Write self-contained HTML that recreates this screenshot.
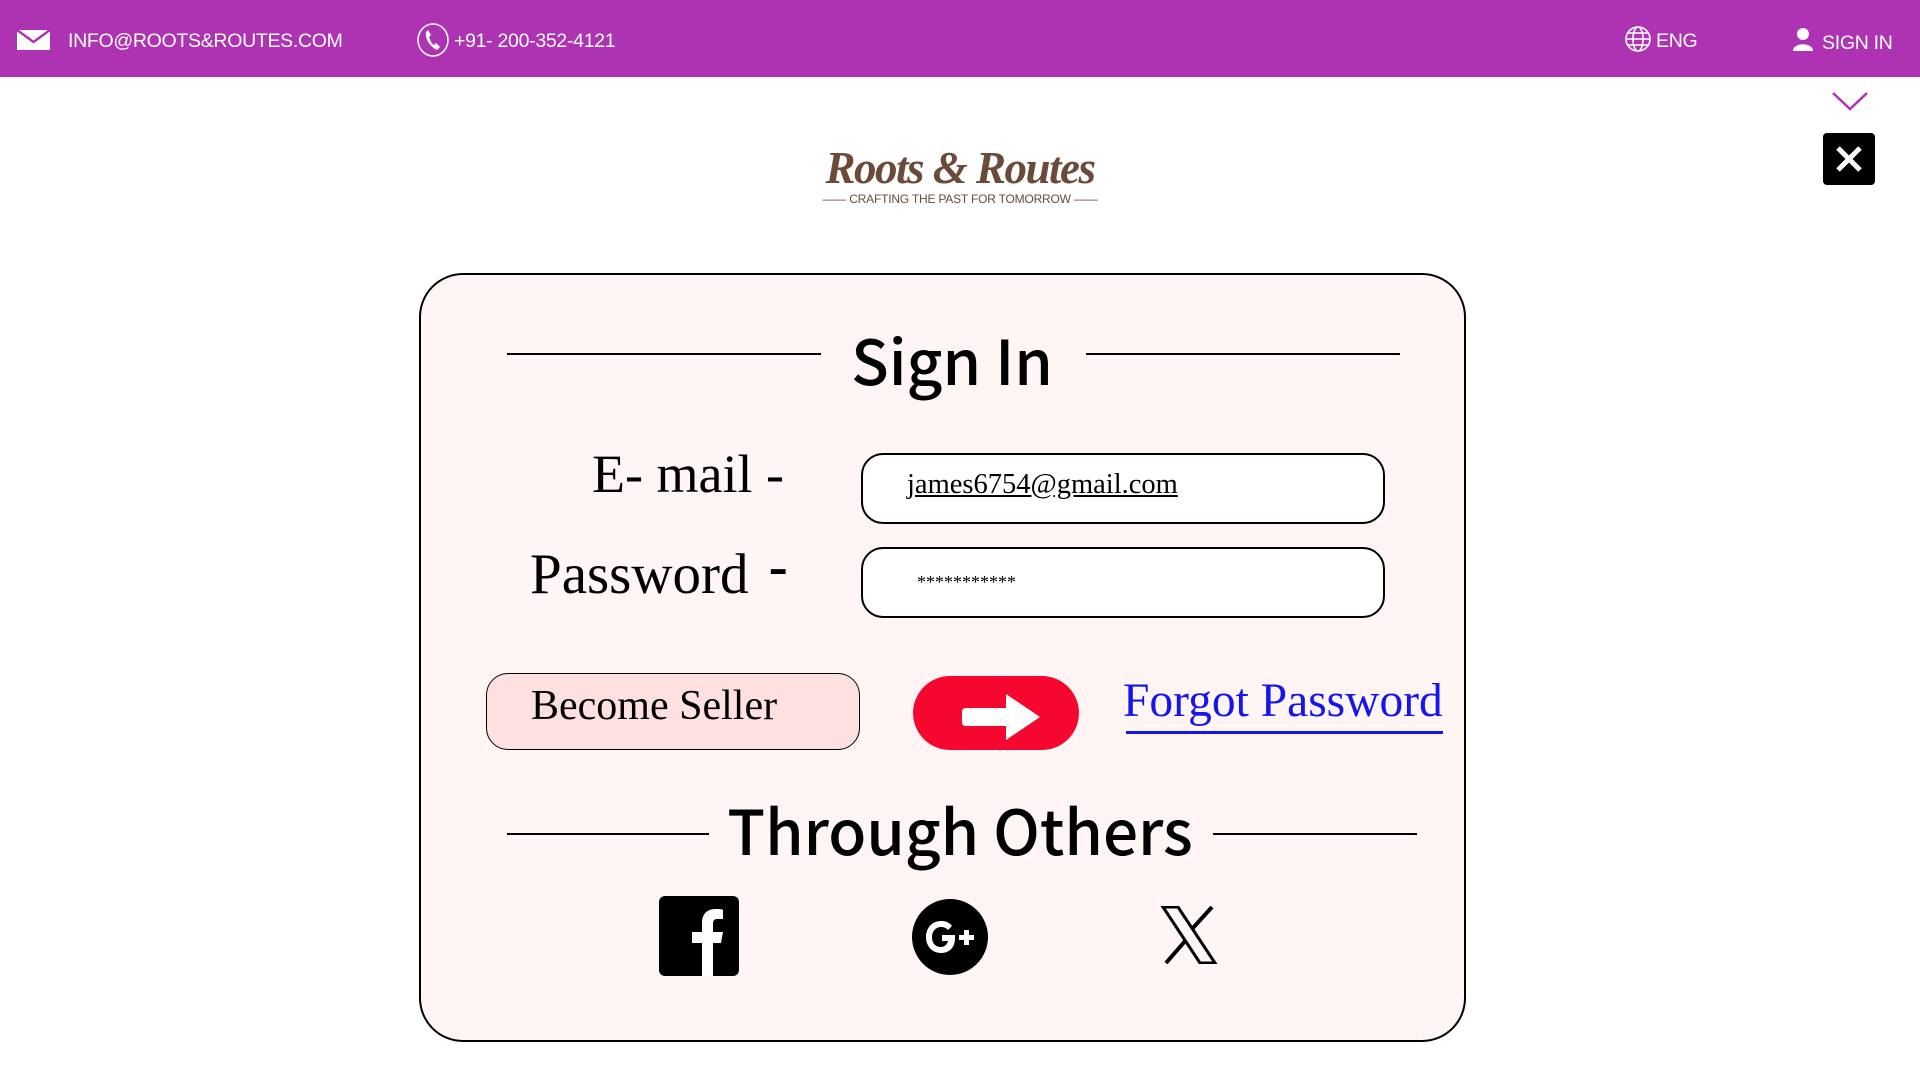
<!DOCTYPE html>
<html><head><meta charset="utf-8"><style>
*{margin:0;padding:0;box-sizing:border-box}
body{width:1920px;height:1080px;background:#fff;position:relative;overflow:hidden;font-family:"Liberation Sans",sans-serif}
.a{position:absolute}
.top{left:0;top:0;width:1920px;height:77px;background:#AD33B3}
.tt{color:#fff;font-size:19.5px;top:29px;line-height:24px;letter-spacing:-0.3px}
.card{left:419px;top:273px;width:1047px;height:769px;border:2.5px solid #000;border-radius:44px;background:#FFF5F5}
.hd{font-family:"Noto Sans CJK JP","Liberation Sans",sans-serif;font-weight:500;color:#000;text-align:center;white-space:nowrap}
.ln{height:2px;background:#000}
.ser{font-family:"Liberation Serif",serif;color:#000;white-space:nowrap}
.inp{border:2px solid #000;border-radius:22px;background:#fff}
</style></head><body>
<div class="a top"></div>
<svg class="a" style="left:17px;top:30px" width="33" height="20" viewBox="0 0 33 20"><rect width="33" height="20" fill="#fff"/><path d="M0 0 L16.5 12 L33 0" fill="none" stroke="#AD33B3" stroke-width="2.5"/></svg>
<div class="a tt" style="left:68px">INFO@ROOTS&amp;ROUTES.COM</div>
<svg class="a" style="left:417px;top:23px" width="32" height="34" viewBox="0 0 32 34"><ellipse cx="16" cy="17" rx="15" ry="16" fill="none" stroke="#fff" stroke-width="1.5"/><path d="M9 9 C8 15 12 23 20 27 L23 24 L19 20 L17 22 C14 20 13 17 12 14 L14 12 L11 7 Z" fill="#fff"/></svg>
<div class="a tt" style="left:454px">+91- 200-352-4121</div>
<svg class="a" style="left:1624px;top:25px" width="28" height="28" viewBox="0 0 28 28" fill="none" stroke="#fff" stroke-width="1.6"><circle cx="14" cy="14" r="12"/><ellipse cx="14" cy="14" rx="5" ry="12"/><path d="M2 14H26M4 8H24M4 20H24"/></svg>
<div class="a tt" style="left:1656px">ENG</div>
<svg class="a" style="left:1792px;top:27px" width="22" height="24" viewBox="0 0 22 24"><circle cx="11" cy="7" r="6" fill="#fff"/><path d="M1 24 C1 15 21 15 21 24Z" fill="#fff"/></svg>
<div class="a tt" style="left:1822px;top:31px">SIGN IN</div>
<svg class="a" style="left:1831px;top:90px" width="38" height="22" viewBox="0 0 38 22"><path d="M2 3 L19 19 L36 3" fill="none" stroke="#AD33B3" stroke-width="2.5"/></svg>
<div class="a" style="left:1823px;top:133px;width:52px;height:52px;background:#000;border-radius:4px"></div>
<svg class="a" style="left:1823px;top:133px" width="52" height="52"><path d="M15 15L37 37M37 15L15 37" stroke="#fff" stroke-width="5"/></svg>
<div class="a" style="left:780px;top:142px;width:360px;text-align:center;font-family:'Liberation Serif',serif;font-style:italic;font-weight:bold;font-size:45px;color:#6B4A3A;letter-spacing:-1.5px">Roots &amp; Routes</div>
<div class="a" style="left:780px;top:192px;width:360px;text-align:center;font-size:12px;color:#6B4A3A;letter-spacing:-0.2px">—— CRAFTING THE PAST FOR TOMORROW ——</div>

<div class="a card"></div>
<div class="a ln" style="left:507px;top:353px;width:314px"></div>
<div class="a ln" style="left:1086px;top:353px;width:314px"></div>
<div class="a hd" style="left:802px;top:315px;width:300px;font-size:62px;line-height:86px">Sign In</div>

<div class="a ser" style="left:592px;top:444px;font-size:54px;line-height:60px">E- mail -</div>
<div class="a ser" style="left:530px;top:545px;font-size:57px;line-height:60px">Password <b style="position:relative;top:-8px;left:6px">-</b></div>
<div class="a inp" style="left:861px;top:453px;width:524px;height:71px"></div>
<div class="a ser" style="left:907px;top:469px;font-size:28.5px;text-decoration:underline">james6754@gmail.com</div>
<div class="a inp" style="left:861px;top:547px;width:524px;height:71px"></div>
<div class="a ser" style="left:917px;top:572px;font-size:18px">***********</div>

<div class="a" style="left:486px;top:673px;width:374px;height:77px;background:#FFE0E0;border:1.5px solid #000;border-radius:22px"></div>
<div class="a ser" style="left:531px;top:681px;font-size:42px;line-height:50px">Become Seller</div>
<div class="a" style="left:913px;top:676px;width:166px;height:74px;background:#F5072F;border-radius:37px"></div>
<svg class="a" style="left:962px;top:692px" width="82" height="50" viewBox="0 0 82 50"><path d="M4 16 H44 V2 L78 25 L44 48 V34 H4 Q0 34 0 30 V20 Q0 16 4 16Z" fill="#fff"/></svg>
<div class="a ser" style="left:1123px;top:673px;font-size:47.5px;line-height:56px;color:#1515F0">Forgot Password</div>
<div class="a" style="left:1126px;top:731px;width:317px;height:2.5px;background:#1515F0"></div>

<div class="a ln" style="left:507px;top:833px;width:202px"></div>
<div class="a ln" style="left:1213px;top:833px;width:204px"></div>
<div class="a hd" style="left:710px;top:783px;width:500px;font-size:62px;line-height:90px">Through Others</div>

<svg class="a" style="left:659px;top:896px" width="80" height="80" viewBox="0 0 80 80"><rect width="80" height="80" rx="6" fill="#000"/><path d="M43 80 V47 H33 V36 H43 V27 C43 18 48 13 57 13 C60 13 63 13 64 14 V23 H58 C55 23 54 25 54 28 V36 H64 L62 47 H54 V80Z" fill="#fff"/></svg>
<svg class="a" style="left:912px;top:899px" width="76" height="76" viewBox="0 0 76 76"><circle cx="38" cy="38" r="38" fill="#000"/><path d="M40 27 C37 23 33 22 29 22 C20 22 14 29 14 38 C14 47 20 54 29 54 C37 54 43 49 43 39 V36 H30 V42 H36 C35 46 32 48 29 48 C23 48 20 44 20 38 C20 32 24 28 29 28 C32 28 34 29 36 31Z" fill="#fff"/><path d="M52 31 H57 V36 H62 V41 H57 V46 H52 V41 H47 V36 H52Z" fill="#fff"/></svg>
<svg class="a" style="left:1160px;top:906px" width="58" height="58" viewBox="0 0 58 58"><path d="M3 1 H18 L55 57 H40Z" fill="none" stroke="#000" stroke-width="3"/><path d="M52 1 L32 23 M6 57 L26 34" stroke="#000" stroke-width="4"/></svg>
</body></html>
